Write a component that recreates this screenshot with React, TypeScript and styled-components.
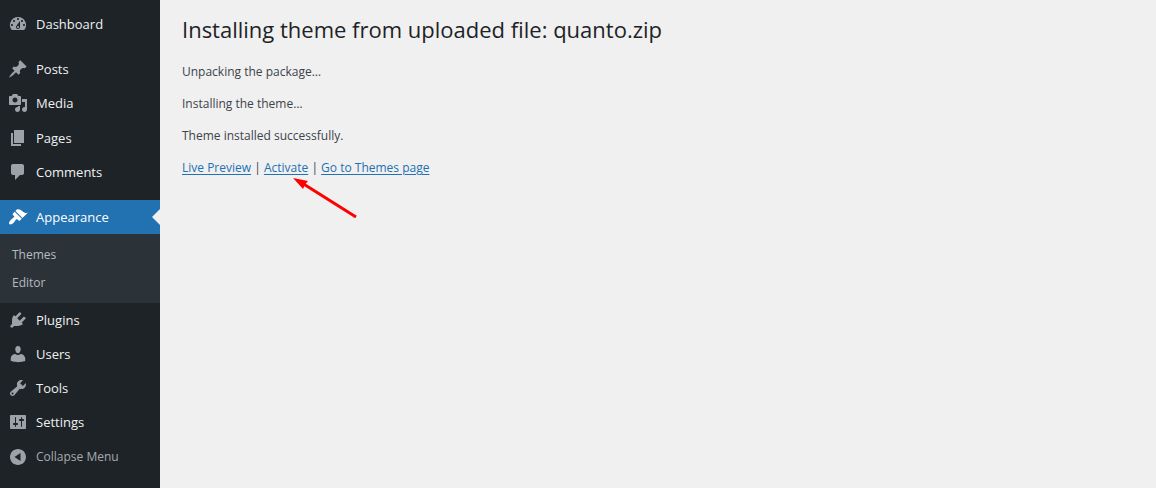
import React from "react";
import styled, { createGlobalStyle } from "styled-components";

const GlobalStyle = createGlobalStyle`
  *, *::before, *::after { box-sizing: border-box; }
  body {
    margin: 0;
    background: #f0f0f0;
    color: #3c434a;
    font-family: "Segoe UI", "Open Sans", "Noto Sans", sans-serif;
    font-size: 12px;
    line-height: 20px;
  }
`;

const Page = styled.div`
  display: flex;
  min-height: 100vh;
`;

const Sidebar = styled.nav`
  flex: 0 0 160px;
  padding-top: 7px;
  background: #1d2327;
`;

const Menu = styled.ul`
  margin: 0;
  padding: 0;
  list-style: none;
`;

const MenuItem = styled.li<{ $gap?: number }>`
  margin-top: ${({ $gap = 0 }) => $gap}px;
`;

const MenuLink = styled.a<{ $current?: boolean }>`
  position: relative;
  display: flex;
  align-items: center;
  gap: 8px;
  height: 34px;
  padding: 0 8px;
  background: ${({ $current }) => ($current ? "#2271b1" : "transparent")};
  color: ${({ $current }) => ($current ? "#ffffff" : "#f0f0f1")};
  font-size: 13px;
  text-decoration: none;

  &::after {
    content: "";
    display: ${({ $current }) => ($current ? "block" : "none")};
    position: absolute;
    top: 9px;
    right: 0;
    border: 8px solid transparent;
    border-left-width: 0;
    border-right-color: #f0f0f0;
  }
`;

const MenuIcon = styled.svg<{ $current?: boolean }>`
  flex: none;
  width: 20px;
  height: 20px;
  fill: ${({ $current }) => ($current ? "#ffffff" : "#9ca2a7")};
`;

const Submenu = styled.ul`
  margin: 0;
  padding: 7px 0 6px;
  background: #2c3338;
  list-style: none;
`;

const SubmenuLink = styled.a`
  display: block;
  padding: 4px 12px;
  color: #b5bbc1;
  text-decoration: none;
`;

const CollapseButton = styled.button`
  display: flex;
  align-items: center;
  gap: 8px;
  width: 100%;
  height: 36px;
  padding: 0 8px;
  border: 0;
  background: none;
  color: #a7aaad;
  font: inherit;
  text-align: left;
`;

const Content = styled.main`
  flex: 1;
  min-width: 0;
  padding: 14px 20px 20px 22px;
`;

const Title = styled.h1`
  margin: 0 0 18px;
  color: #1d2327;
  font-size: 22px;
  font-weight: 400;
  line-height: 30px;
`;

const Message = styled.p`
  margin: 0 0 12px;
`;

const ActionLink = styled.a`
  color: #2271b1;
  text-decoration: underline;
  text-underline-offset: 2px;
`;

const PointedLink = styled.span`
  position: relative;
`;

const Arrow = styled.svg`
  position: absolute;
  top: 17px;
  left: 28px;
  width: 68px;
  height: 44px;
  pointer-events: none;
`;

interface Entry {
  label: string;
  icon: string;
  gap?: number;
  children?: string[];
}

const entries: Entry[] = [
  {
    label: "Dashboard",
    icon: "M3.76 16h12.48A7.998 7.998 0 0 0 10 3a7.998 7.998 0 0 0-6.24 13zM10 4c.55 0 1 .45 1 1s-.45 1-1 1-1-.45-1-1 .45-1 1-1zM6 6c.55 0 1 .45 1 1s-.45 1-1 1-1-.45-1-1 .45-1 1-1zm8 0c.55 0 1 .45 1 1s-.45 1-1 1-1-.45-1-1 .45-1 1-1zm-5.37 5.55L12 7v6c0 1.1-.9 2-2 2s-2-.9-2-2c0-.57.24-1.08.63-1.45zM4 10c.55 0 1 .45 1 1s-.45 1-1 1-1-.45-1-1 .45-1 1-1zm12 0c.55 0 1 .45 1 1s-.45 1-1 1-1-.45-1-1 .45-1 1-1zm-5 3c0-.55-.45-1-1-1s-1 .45-1 1 .45 1 1 1 1-.45 1-1z",
  },
  {
    label: "Posts",
    gap: 11,
    icon: "M10.44 3.02l1.82-1.82 6.36 6.35-1.83 1.82c-1.05-.68-2.48-.57-3.41.36l-.75.75c-.92.93-1.04 2.35-.35 3.41l-1.83 1.82-2.41-2.41-2.8 2.79c-.42.42-3.38 2.71-3.8 2.29s1.86-3.39 2.28-3.81l2.79-2.79L4.1 9.36l1.83-1.82c1.05.69 2.48.57 3.4-.36l.75-.75c.93-.92 1.05-2.35.36-3.41z",
  },
  {
    label: "Media",
    icon: "M13 11V4c0-.55-.45-1-1-1h-1.67L9 1H5L3.67 3H2c-.55 0-1 .45-1 1v7c0 .55.45 1 1 1h10c.55 0 1-.45 1-1zM7 4.5c1.38 0 2.5 1.12 2.5 2.5S8.38 9.5 7 9.5 4.5 8.38 4.5 7 5.62 4.5 7 4.5zM14 6h5v10.5c0 1.38-1.12 2.5-2.5 2.5S14 17.88 14 16.5s1.12-2.5 2.5-2.5c.17 0 .34.02.5.05V9h-3V6zm-4 8.05V13h2v3.5c0 1.38-1.12 2.5-2.5 2.5S7 17.88 7 16.5 8.12 14 9.5 14c.17 0 .34.02.5.05z",
  },
  { label: "Pages", gap: 1, icon: "M6 15V2h10v13H6zm-1 1h8v2H3V5h2v11z" },
  {
    label: "Comments",
    icon: "M5 2h9c1.1 0 2 .9 2 2v7c0 1.1-.9 2-2 2h-2l-5 5v-5H5c-1.1 0-2-.9-2-2V4c0-1.1.9-2 2-2z",
  },
  {
    label: "Appearance",
    gap: 11,
    children: ["Themes", "Editor"],
    icon: "M14.48 11.06L7.41 3.99l1.5-1.5c.5-.56 2.3-.47 3.51.32 1.21.8 1.43 1.28 2.91 2.1 1.18.64 2.45 1.26 4.45.85zm-.71.71L6.7 4.7 4.93 6.47c-.39.39-.39 1.02 0 1.41l1.06 1.06c.39.39.39 1.03 0 1.42-.6.6-1.43 1.11-2.21 1.69-.35.26-.7.53-1.01.84C1.43 14.23.4 16.08 1.4 17.07c.99 1 2.84-.03 4.18-1.36.31-.31.58-.66.85-1.02.57-.78 1.08-1.61 1.69-2.21.39-.39 1.02-.39 1.41 0l1.06 1.06c.39.39 1.02.39 1.41 0z",
  },
  {
    label: "Plugins",
    icon: "M13.11 4.36L9.2 8.27 7.33 6.4l3.91-3.91c.35-.34 1.05-.2 1.56.32.52.51.66 1.21.31 1.55zM5.11 6.13l.91-1.12 9.01 9.01-1.19.84c-.71.71-2.63 1.16-3.82 1.16H6.14L4.9 17.26c-.59.59-1.54.59-2.12 0-.59-.58-.59-1.53 0-2.12l1.24-1.24v-3.88c0-1.13.4-3.19 1.09-3.89zM11.7 10.77l3.91-3.91c.34-.35 1.04-.21 1.55.31.52.51.66 1.21.31 1.55l-3.91 3.92z",
  },
  {
    label: "Users",
    icon: "M10 9.25c-2.27 0-2.73-3.44-2.73-3.44C7 4.02 7.82 2 9.97 2c2.16 0 2.98 2.02 2.71 3.81 0 0-.41 3.44-2.68 3.44zM7.23 10C8 10.7 9 11 10 11s2-.3 2.72-1c2.39 0 4.52 2.33 4.52 4.53v2.49s-3.65 1.13-7.24 1.13c-3.65 0-7.24-1.13-7.24-1.13v-2.49c0-2.25 1.94-4.53 4.47-4.53z",
  },
  {
    label: "Tools",
    icon: "M16.68 9.77c-1.34 1.34-3.3 1.67-4.95.99l-5.41 6.52c-.99.99-2.59.99-3.58 0s-.99-2.59 0-3.57l6.52-5.42c-.68-1.65-.35-3.61.99-4.95 1.28-1.28 3.12-1.62 4.72-1.06l-2.89 2.89 2.82 2.82 2.86-2.87c.53 1.58.18 3.39-1.08 4.65zM3.81 16.21c.4.39 1.04.39 1.43 0 .4-.4.4-1.04 0-1.43-.39-.4-1.03-.4-1.43 0-.39.39-.39 1.03 0 1.43z",
  },
  {
    label: "Settings",
    icon: "M18 16V4c0-.55-.45-1-1-1H3c-.55 0-1 .45-1 1v12c0 .55.45 1 1 1h14c.55 0 1-.45 1-1zM8 11h1c.55 0 1 .45 1 1s-.45 1-1 1H8v1.5c0 .28-.22.5-.5.5s-.5-.22-.5-.5V13H6c-.55 0-1-.45-1-1s.45-1 1-1h1V5.5c0-.28.22-.5.5-.5s.5.22.5.5V11zm5-2h-1c-.55 0-1-.45-1-1s.45-1 1-1h1V5.5c0-.28.22-.5.5-.5s.5.22.5.5V7h1c.55 0 1 .45 1 1s-.45 1-1 1h-1v5.5c0 .28-.22.5-.5.5s-.5-.22-.5-.5V9z",
  },
];

const collapseIcon =
  "M10 2c4.42 0 8 3.58 8 8s-3.58 8-8 8-8-3.58-8-8 3.58-8 8-8zm2.5 12V6l-6 4z";

export default function App() {
  return (
    <>
      <GlobalStyle />
      <Page>
        <Sidebar aria-label="Main menu">
          <Menu>
            {entries.map(({ label, icon, gap, children }) => {
              const current = Boolean(children);
              return (
                <MenuItem key={label} $gap={gap}>
                  <MenuLink href="#" $current={current}>
                    <MenuIcon viewBox="0 0 20 20" aria-hidden="true" $current={current}>
                      <path d={icon} fillRule={label === "Plugins" ? "nonzero" : "evenodd"} />
                    </MenuIcon>
                    {label}
                  </MenuLink>
                  {children && (
                    <Submenu>
                      {children.map((child) => (
                        <li key={child}>
                          <SubmenuLink href="#">{child}</SubmenuLink>
                        </li>
                      ))}
                    </Submenu>
                  )}
                </MenuItem>
              );
            })}
          </Menu>
          <CollapseButton type="button">
            <MenuIcon viewBox="0 0 20 20" aria-hidden="true">
              <path d={collapseIcon} fillRule="evenodd" />
            </MenuIcon>
            Collapse Menu
          </CollapseButton>
        </Sidebar>
        <Content>
          <Title>Installing theme from uploaded file: quanto.zip</Title>
          <Message>Unpacking the package…</Message>
          <Message>Installing the theme…</Message>
          <Message>Theme installed successfully.</Message>
          <Message>
            <ActionLink href="#">Live Preview</ActionLink> |{" "}
            <PointedLink>
              <ActionLink href="#">Activate</ActionLink>
              <Arrow viewBox="0 0 68 44" aria-hidden="true">
                <path d="M10 7L64 41" stroke="#ff0000" strokeWidth="3" fill="none" />
                <path d="M1 2L16 5L13 8.5L11 13Z" fill="#ff0000" />
              </Arrow>
            </PointedLink>{" "}
            | <ActionLink href="#">Go to Themes page</ActionLink>
          </Message>
        </Content>
      </Page>
    </>
  );
}
